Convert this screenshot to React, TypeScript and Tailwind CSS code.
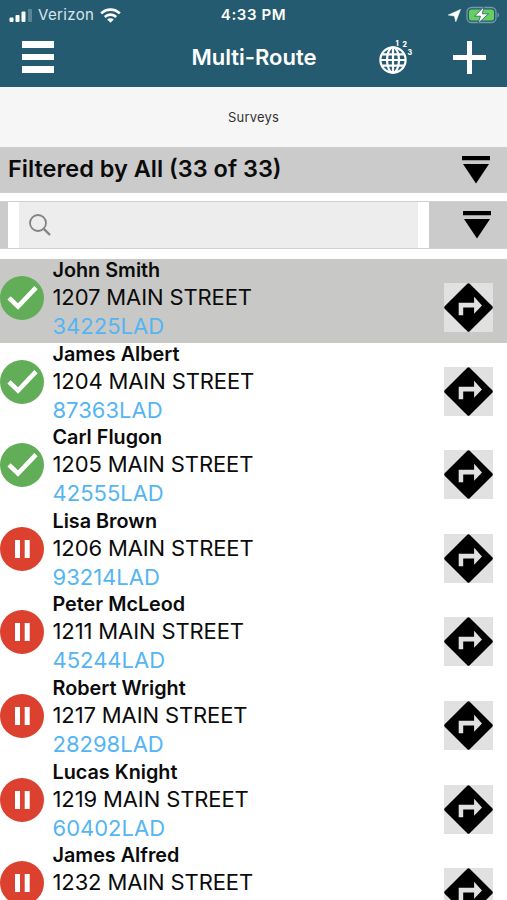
type Status = 'done' | 'paused';

interface Stop {
  name: string;
  address: string;
  code?: string;
  status: Status;
}

const STOPS: Stop[] = [
  { name: 'John Smith', address: '1207 MAIN STREET', code: '34225LAD', status: 'done' },
  { name: 'James Albert', address: '1204 MAIN STREET', code: '87363LAD', status: 'done' },
  { name: 'Carl Flugon', address: '1205 MAIN STREET', code: '42555LAD', status: 'done' },
  { name: 'Lisa Brown', address: '1206 MAIN STREET', code: '93214LAD', status: 'paused' },
  { name: 'Peter McLeod', address: '1211 MAIN STREET', code: '45244LAD', status: 'paused' },
  { name: 'Robert Wright', address: '1217 MAIN STREET', code: '28298LAD', status: 'paused' },
  { name: 'Lucas Knight', address: '1219 MAIN STREET', code: '60402LAD', status: 'paused' },
  { name: 'James Alfred', address: '1232 MAIN STREET', status: 'paused' },
];

function StatusBar() {
  return (
    <div className="grid h-[30px] grid-cols-3 items-center pr-[7px] pl-[9px] text-[15px] text-white">
      <div className="flex items-center">
        <svg className="h-[13px] w-[23px]" viewBox="0 0 23 13" fill="white" aria-hidden="true">
          <rect x="0.5" y="8.5" width="4" height="4.5" rx="1" />
          <rect x="6.5" y="6" width="4" height="7" rx="1" />
          <rect x="12.5" y="2.5" width="4" height="10.5" rx="1" />
          <rect x="19" y="0" width="4" height="13" rx="1" opacity="0.25" />
        </svg>
        <span className="ml-[6px] tracking-[0.35px] text-[#d9e6eb]">Verizon</span>
        <svg className="ml-[6px] h-[15px] w-[21px]" viewBox="0 0 21 15" fill="none" stroke="white" aria-hidden="true">
          <path d="M1.2 5.4a13.2 13.2 0 0 1 18.6 0" strokeWidth="2.7" />
          <path d="M4.8 9a8.1 8.1 0 0 1 11.4 0" strokeWidth="2.6" />
          <path d="M10.5 14.8 7.2 11.5a4.7 4.7 0 0 1 6.6 0z" fill="white" stroke="none" />
        </svg>
      </div>
      <span className="-ml-[2px] text-center font-semibold tracking-[0.6px]">4:33 PM</span>
      <div className="flex items-center justify-end">
        <svg className="h-[13px] w-[13px]" viewBox="0 0 13 13" fill="white" aria-hidden="true">
          <path d="M12.5.5 7.8 12.7 6.4 7 .3 6z" stroke="white" strokeWidth="0.6" strokeLinejoin="round" />
        </svg>
        <svg className="ml-[5px] h-[18px] w-[34px]" viewBox="0 0 34 18" aria-hidden="true">
          <rect x="1" y="1.5" width="29" height="15" rx="4.5" fill="none" stroke="#7899a7" strokeWidth="1.3" />
          <path d="M31.5 6.5c2 .8 2 4.2 0 5z" fill="#7899a7" />
          <rect x="3" y="3.5" width="25" height="11" rx="2.5" fill="#65cf60" />
          <path d="M18 .8 8.5 10.2h6L12 17.4 22.5 7.8h-6.2z" fill="white" stroke="#255b70" strokeWidth="0.8" />
        </svg>
      </div>
    </div>
  );
}

function GlobeIcon() {
  return (
    <svg className="h-[34px] w-[34px]" viewBox="0 0 34 34" fill="none" stroke="white" strokeWidth="2.2" aria-hidden="true">
      <circle cx="14" cy="20" r="12.6" />
      <ellipse cx="14" cy="20" rx="6" ry="12.6" />
      <path d="M14 7.4v25.2M1.4 20h25.2M3.2 14.3h21.6M3.2 25.7h21.6" />
      <g fill="white" stroke="none" fontFamily="Inter, sans-serif" fontWeight="800" fontSize="7">
        <text x="16.5" y="5.5">1</text>
        <text x="23.5" y="7">2</text>
        <text x="28.5" y="15">3</text>
      </g>
    </svg>
  );
}

function NavBar() {
  return (
    <div className="grid h-[57px] grid-cols-[1fr_auto_1fr] items-center pr-[21px] pb-[3px] pl-[22px]">
      <button type="button" className="flex w-8 flex-col gap-[6px]" aria-label="Menu">
        <span className="h-[6.5px] w-full bg-white" />
        <span className="h-[6.5px] w-full bg-white" />
        <span className="h-[6.5px] w-full bg-white" />
      </button>
      <h1 className="text-[22px] leading-none font-semibold text-white">Multi-Route</h1>
      <div className="flex items-center justify-end gap-[40px]">
        <button type="button" aria-label="Map order">
          <GlobeIcon />
        </button>
        <button type="button" aria-label="Add">
          <svg className="h-[33px] w-[33px]" viewBox="0 0 33 33" stroke="white" strokeWidth="5" aria-hidden="true">
            <path d="M16.5 0v33M0 16.5h33" />
          </svg>
        </button>
      </div>
    </div>
  );
}

function DropIcon() {
  return (
    <svg className="h-7 w-7" viewBox="0 0 28 28" aria-hidden="true">
      <path d="M0 0h28v4.3H0zM1 8h26L14 27.5z" />
    </svg>
  );
}

function StatusIcon({ status }: { status: Status }) {
  return (
    <svg className="h-11 w-11" viewBox="0 0 44 44" aria-hidden="true">
      <circle cx="22" cy="22" r="22" fill={status === 'done' ? '#62ad57' : '#dc4130'} />
      {status === 'done' ? (
        <path d="M9 21.8 18 30.5 36 11.7" fill="none" stroke="white" strokeWidth="4.6" />
      ) : (
        <path d="M15 13h5v18h-5zM24.7 13h5v18h-5z" fill="white" />
      )}
    </svg>
  );
}

function DirectionsIcon() {
  return (
    <svg className="h-[49px] w-[49px] bg-[#e1e1e1]" viewBox="0 0 49 49" aria-hidden="true">
      <path d="M23.3.7q1.2-1 2.4 0l22.6 22.6q1 1.2 0 2.4L25.7 48.3q-1.2 1-2.4 0L.7 25.7q-1-1.2 0-2.4z" />
      <path d="M14.7 32.2V19.8h15.4v-6l7.9 8.7-7.9 8.3v-6.4H19.2v7.8z" fill="#e1e1e1" />
    </svg>
  );
}

function StopRow({ stop, selected }: { stop: Stop; selected: boolean }) {
  return (
    <li className={`flex h-[83.6px] shrink-0 items-start pr-[14px] ${selected ? 'bg-[#c8c8c6]' : 'bg-white'}`}>
      <div className="mt-[17px] w-[52.5px] shrink-0">
        <StatusIcon status={stop.status} />
      </div>
      <div className="flex-1 whitespace-nowrap">
        <div className="text-[19.8px] leading-[22px] font-semibold">{stop.name}</div>
        <div className="text-[22px] leading-[32px] tracking-[-0.12px]">{stop.address}</div>
        {stop.code && <div className="text-[22px] leading-[26px] text-[#55b5f3]">{stop.code}</div>}
      </div>
      <button type="button" className="mt-[24px]" aria-label={`Directions to ${stop.address}`}>
        <DirectionsIcon />
      </button>
    </li>
  );
}

export default function App() {
  return (
    <div className="flex h-[900px] w-full flex-col overflow-hidden bg-white font-['Inter',sans-serif] text-[#0b0b0b]">
      <header className="h-[87px] shrink-0 bg-[#255b70]">
        <StatusBar />
        <NavBar />
      </header>

      <div className="flex h-[60px] shrink-0 items-center justify-center bg-[#f6f6f6] pt-px text-[13px] tracking-[0.2px] text-[#333]">
        Surveys
      </div>

      <div className="flex h-[46px] shrink-0 items-center justify-between bg-[#cbcbcb] pr-[17px] pl-2">
        <h2 className="-mt-[2px] text-[23.5px] font-semibold">Filtered by All (33 of 33)</h2>
        <DropIcon />
      </div>

      {/* Search */}
      <div className="mt-2 flex h-12 shrink-0 border-y border-[#d0d0d0] bg-[#cbcbcb] pl-[7.5px]">
        <div className="flex w-[421.5px] bg-white px-[11px]">
          <div className="flex flex-1 items-center bg-[#ededed] pl-[10px]">
            <svg className="h-[22px] w-[22px]" viewBox="0 0 22 22" fill="none" stroke="#838383" aria-hidden="true">
              <circle cx="9" cy="9" r="8" strokeWidth="1.8" />
              <path d="m14.8 14.8 6.2 6.2" strokeWidth="2.4" />
            </svg>
          </div>
        </div>
        <div className="flex flex-1 items-center justify-end pr-4">
          <DropIcon />
        </div>
      </div>

      <ul className="mt-[10px] flex flex-col">
        {STOPS.map((stop, i) => (
          <StopRow key={stop.name} stop={stop} selected={i === 0} />
        ))}
      </ul>
    </div>
  );
}
